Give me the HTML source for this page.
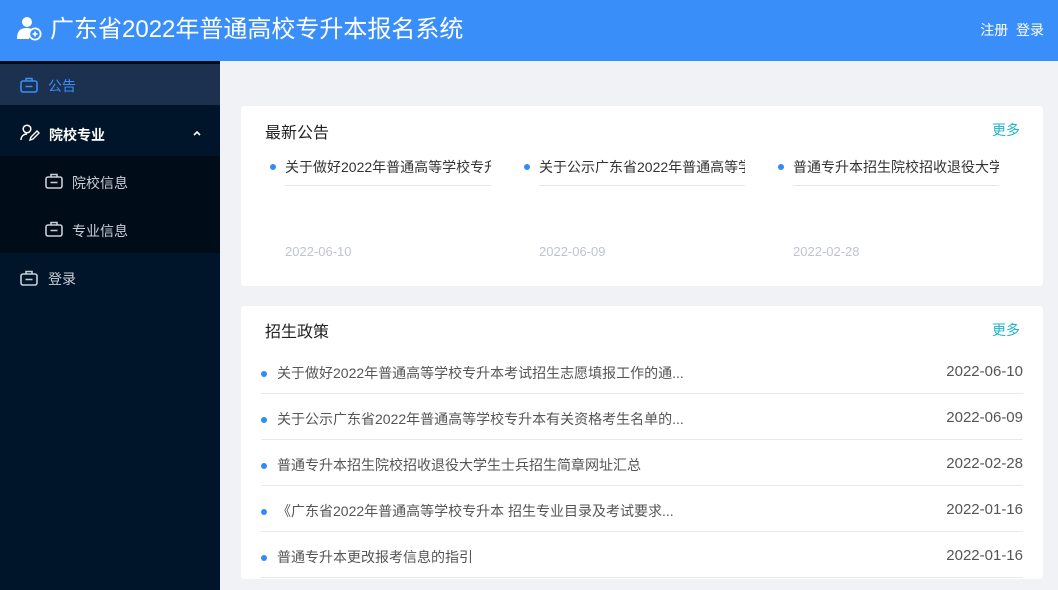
<!DOCTYPE html>
<html><head><meta charset="utf-8"><style>
*{margin:0;padding:0;box-sizing:border-box}
html,body{width:1058px;height:590px;overflow:hidden}
body{background:#f0f2f5;font-family:"Liberation Sans","Noto Sans CJK SC",sans-serif;position:relative}
.hd{position:absolute;left:0;top:0;width:1058px;height:61px;background:#3a8ef9;color:#fff}
.hd .t{position:absolute;left:50px;top:14px;font-size:24px;line-height:32px}
.hd .r{position:absolute;right:14px;top:20px;font-size:14px}
.sb{position:absolute;left:0;top:61px;width:220px;height:529px;background:#001529}
.it{position:absolute;left:0;width:220px;font-size:14px;color:#c9ced6}
.ab{position:absolute;}
.card{position:absolute;left:241px;width:802px;background:#fff;border-radius:3px}
.ct{position:absolute;left:24px;font-size:16px;color:#222}
.more{position:absolute;right:23px;font-size:14px;color:#1fb3c9}
.col{position:absolute;top:0;width:220px}
.dot{position:absolute;width:6px;height:6px;border-radius:3px;background:#2f8cf7}
.row{position:absolute;left:20px;width:762px;height:46px;border-bottom:1px solid #e8e8ea;font-size:14px;color:#555}
</style></head><body>
<div class="hd">
<svg style="position:absolute;left:16px;top:16px" width="26" height="26" viewBox="0 0 26 26"><circle cx="11" cy="6" r="5" fill="#fff"/><path d="M1 23 C1 14 5 12 11 12 C14 12 15 13 15 13 L13 23Z" fill="#fff"/><circle cx="19" cy="18" r="6.5" fill="#fff"/><circle cx="19" cy="18" r="4.8" fill="#3a8ef9"/><path d="M16.5 18h5M19 15.5v5" stroke="#fff" stroke-width="1.6"/></svg>
<div class="t">广东省2022年普通高校专升本报名系统</div>
<div class="r">注册&nbsp;&nbsp;登录</div>
</div>
<div class="sb">
<div style="position:absolute;left:0;top:0;width:220px;height:3px;background:#000b16"></div>
<div class="it" style="top:3px;height:41px;background:#1c3050;color:#3a8ef9"><svg class="ab" style="left:20px;top:13px" width="18" height="16" viewBox="0 0 18 16"><rect x="1" y="4" width="16" height="11" rx="2" fill="none" stroke="#3a8ef9" stroke-width="1.6"/><path d="M6 4V1.5h6V4M5.5 9.5h7" stroke="#3a8ef9" stroke-width="1.6" fill="none"/></svg><span class="ab" style="left:48px;top:12px">公告</span></div>
<div class="it" style="top:44px;height:51px;color:#fff"><svg class="ab" style="left:20px;top:19px" width="20" height="17" viewBox="0 0 20 17"><circle cx="7" cy="5" r="3.8" fill="none" stroke="#fff" stroke-width="1.5"/><path d="M1 16c0-4 3-6 6-6" fill="none" stroke="#fff" stroke-width="1.5"/><path d="M10 16l1-3 6-6 2 2-6 6z" fill="none" stroke="#fff" stroke-width="1.4"/></svg><span class="ab" style="left:49px;top:20px;font-weight:bold">院校专业</span><svg class="ab" style="left:193px;top:25px" width="8" height="6"><path d="M1 5l3-3 3 3" stroke="#fff" stroke-width="1.6" fill="none"/></svg></div>
<div style="position:absolute;top:95px;left:0;width:220px;height:97px;background:#000c17"></div>
<div class="it" style="top:95px;height:48px"><svg class="ab" style="left:45px;top:17px" width="18" height="16" viewBox="0 0 18 16"><rect x="1" y="4" width="16" height="11" rx="2" fill="none" stroke="#c9ced6" stroke-width="1.6"/><path d="M6 4V1.5h6V4M5.5 9.5h7" stroke="#c9ced6" stroke-width="1.6" fill="none"/></svg><span class="ab" style="left:72px;top:17px">院校信息</span></div>
<div class="it" style="top:143px;height:48px"><svg class="ab" style="left:45px;top:17px" width="18" height="16" viewBox="0 0 18 16"><rect x="1" y="4" width="16" height="11" rx="2" fill="none" stroke="#c9ced6" stroke-width="1.6"/><path d="M6 4V1.5h6V4M5.5 9.5h7" stroke="#c9ced6" stroke-width="1.6" fill="none"/></svg><span class="ab" style="left:72px;top:17px">专业信息</span></div>
<div class="it" style="top:192px;height:48px"><svg class="ab" style="left:20px;top:17px" width="18" height="16" viewBox="0 0 18 16"><rect x="1" y="4" width="16" height="11" rx="2" fill="none" stroke="#c9ced6" stroke-width="1.6"/><path d="M6 4V1.5h6V4M5.5 9.5h7" stroke="#c9ced6" stroke-width="1.6" fill="none"/></svg><span class="ab" style="left:48px;top:16px">登录</span></div>
</div>

<div class="card" style="top:106px;height:180px">
<div class="ct" style="top:13px">最新公告</div><div class="more" style="top:14px">更多</div>
<div class="col" style="left:29px"><div class="dot" style="left:0;top:58px"></div><div style="position:absolute;left:15px;top:51px;width:206px;height:29px;border-bottom:1px solid #e6e6e8;font-size:14px;color:#333;white-space:nowrap;overflow:hidden">关于做好2022年普通高等学校专升本考试</div><div style="position:absolute;left:15px;top:138px;font-size:13px;color:#c0c4cc">2022-06-10</div></div>
<div class="col" style="left:283px"><div class="dot" style="left:0;top:58px"></div><div style="position:absolute;left:15px;top:51px;width:206px;height:29px;border-bottom:1px solid #e6e6e8;font-size:14px;color:#333;white-space:nowrap;overflow:hidden">关于公示广东省2022年普通高等学校</div><div style="position:absolute;left:15px;top:138px;font-size:13px;color:#c0c4cc">2022-06-09</div></div>
<div class="col" style="left:537px"><div class="dot" style="left:0;top:58px"></div><div style="position:absolute;left:15px;top:51px;width:206px;height:29px;border-bottom:1px solid #e6e6e8;font-size:14px;color:#333;white-space:nowrap;overflow:hidden">普通专升本招生院校招收退役大学生</div><div style="position:absolute;left:15px;top:138px;font-size:13px;color:#c0c4cc">2022-02-28</div></div>
</div>

<div class="card" style="top:306px;height:273px">
<div class="ct" style="top:12px">招生政策</div><div class="more" style="top:14px">更多</div>
<div class="row" style="top:42px"><div class="dot" style="left:0;top:23px"></div><span class="ab" style="left:16px;top:15px">关于做好2022年普通高等学校专升本考试招生志愿填报工作的通...</span><span class="ab" style="right:0;top:15px;font-size:15px">2022-06-10</span></div>
<div class="row" style="top:88px"><div class="dot" style="left:0;top:23px"></div><span class="ab" style="left:16px;top:15px">关于公示广东省2022年普通高等学校专升本有关资格考生名单的...</span><span class="ab" style="right:0;top:15px;font-size:15px">2022-06-09</span></div>
<div class="row" style="top:134px"><div class="dot" style="left:0;top:23px"></div><span class="ab" style="left:16px;top:15px">普通专升本招生院校招收退役大学生士兵招生简章网址汇总</span><span class="ab" style="right:0;top:15px;font-size:15px">2022-02-28</span></div>
<div class="row" style="top:180px"><div class="dot" style="left:0;top:23px"></div><span class="ab" style="left:16px;top:15px">《广东省2022年普通高等学校专升本 招生专业目录及考试要求...</span><span class="ab" style="right:0;top:15px;font-size:15px">2022-01-16</span></div>
<div class="row" style="top:226px"><div class="dot" style="left:0;top:23px"></div><span class="ab" style="left:16px;top:15px">普通专升本更改报考信息的指引</span><span class="ab" style="right:0;top:15px;font-size:15px">2022-01-16</span></div>
</div>
</body></html>
